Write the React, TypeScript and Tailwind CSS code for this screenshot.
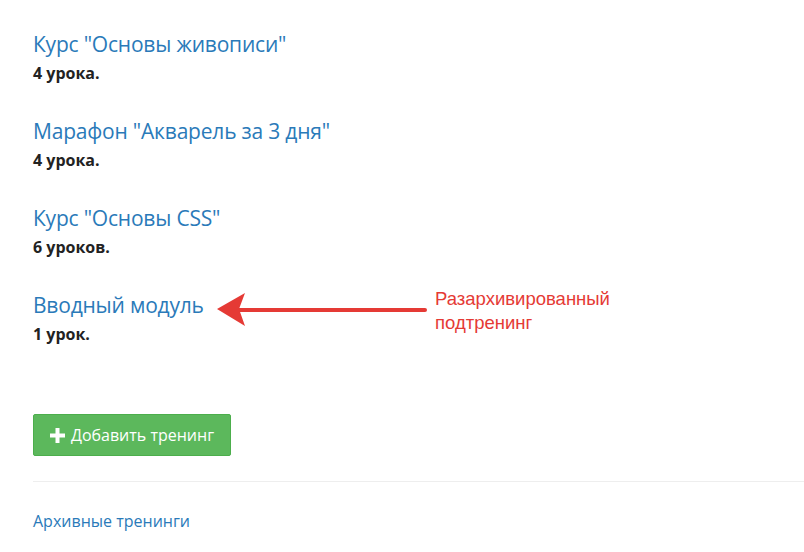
import React from 'react';

type Training = {
  title: string;
  lessons: string;
};

const trainings: Training[] = [
  { title: 'Курс "Основы живописи"', lessons: '4 урока.' },
  { title: 'Марафон "Акварель за 3 дня"', lessons: '4 урока.' },
  { title: 'Курс "Основы CSS"', lessons: '6 уроков.' },
  { title: 'Вводный модуль', lessons: '1 урок.' },
];

const Annotation: React.FC = () => (
  <div className="absolute left-[184px] top-[1px] flex items-start pointer-events-none">
    {/* Arrow */}
    <svg width="212" height="36" viewBox="0 0 212 36">
      <line x1="20" y1="18" x2="208" y2="18" stroke="#e53a35" strokeWidth="4" strokeLinecap="round" />
      <polygon points="0,17 28,1 22,17 28,34" fill="#e53a35" />
    </svg>
    <div
      className="ml-[6px] mt-[-5px] text-[18.5px] leading-[24px] text-[#e53a35]"
      style={{ fontFamily: '"Liberation Sans", Arial, sans-serif' }}
    >
      Разархивированный
      <br />
      подтренинг
    </div>
  </div>
);

export default function App() {
  return (
    <div
      className="min-h-screen w-full bg-white pl-[33px] pt-[30px] overflow-hidden"
      style={{ fontFamily: '"Open Sans", Lato, sans-serif' }}
    >
      {/* Training list */}
      <div className="flex flex-col gap-[34px]">
        {trainings.map((t, i) => (
          <div key={i} className="relative">
            <a href="#" className="block w-fit text-[21px] leading-[28px] text-[#2a7ab9] tracking-[-0.2px]">
              {t.title}
            </a>
            <p className="mt-[5px] text-[16px] leading-[20px] font-bold text-[#222]">{t.lessons}</p>
            {i === trainings.length - 1 && <Annotation />}
          </div>
        ))}
      </div>

      {/* Add button */}
      <button className="mt-[70px] flex h-[42px] w-[198px] items-center justify-center gap-[6px] rounded-[2px] border border-[#4cae4c] bg-[#5cb85c] text-[16px] text-white">
        <svg width="15" height="15" viewBox="0 0 15 15">
          <path d="M5.5 0h4v5.5H15v4H9.5V15h-4V9.5H0v-4h5.5z" fill="#fff" />
        </svg>
        Добавить тренинг
      </button>

      <hr className="mt-[25px] border-t border-[#eeeeee]" />

      <a href="#" className="mt-[29px] block w-fit text-[16px] leading-[20px] text-[#2a7ab9]">
        Архивные тренинги
      </a>
    </div>
  );
}
